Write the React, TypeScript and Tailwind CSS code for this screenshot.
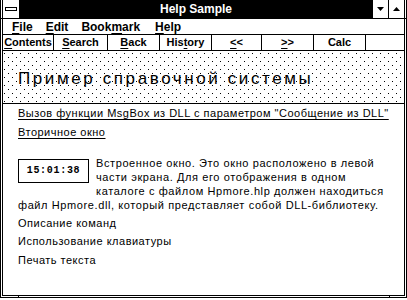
import React from 'react';

const menuItems = [
	{ key: 'file', pre: '', hot: 'F', post: 'ile' },
	{ key: 'edit', pre: '', hot: 'E', post: 'dit' },
	{ key: 'bookmark', pre: 'Book', hot: 'm', post: 'ark' },
	{ key: 'help', pre: '', hot: 'H', post: 'elp' },
];

const buttons = [
	{ key: 'contents', w: 'w-[51px]', pre: '', hot: 'C', post: 'ontents' },
	{ key: 'search', w: 'w-[54px]', pre: '', hot: 'S', post: 'earch' },
	{ key: 'back', w: 'w-[52px]', pre: '', hot: 'B', post: 'ack' },
	{ key: 'history', w: 'w-[52px]', pre: 'His', hot: 't', post: 'ory' },
	{ key: 'prev', w: 'w-[50px]', pre: '', hot: '<', post: '<' },
	{ key: 'next', w: 'w-[52px]', pre: '', hot: '>', post: '>' },
	{ key: 'calc', w: 'w-[52px]', pre: 'Calc', hot: '', post: '' },
];

function Hot({ pre, hot, post }: { pre: string; hot: string; post: string }) {
	return (
		<span>
			{pre}
			{hot && <span className="underline decoration-1 underline-offset-[2px]">{hot}</span>}
			{post}
		</span>
	);
}

export default function App() {
	return (
		<div className="relative w-[407px] h-[300px] bg-white overflow-hidden font-['Liberation_Sans',sans-serif] text-black">
			{/* outer frame */}
			<div className="h-[298px] border-x border-b border-black px-px pb-px bg-white">
				<div className="h-full flex flex-col border-x border-b border-black">
					{/* title bar */}
					<div className="flex h-[19px] border-b border-black">
						<div className="w-[16px] bg-white flex items-center justify-center">
							<div className="w-[12px] h-[4px] border border-black bg-white"></div>
						</div>
						<div className="flex-1 bg-black text-white text-[12px] font-bold flex items-center justify-center">
							Help Sample
						</div>
						<div className="w-[16px] bg-white flex items-center justify-center border-r border-black">
							<svg width="7" height="4" viewBox="0 0 7 4">
								<polygon points="0,0 7,0 3.5,4" fill="#000" />
							</svg>
						</div>
						<div className="w-[15px] bg-white flex items-center justify-center">
							<svg width="7" height="4" viewBox="0 0 7 4">
								<polygon points="0,4 7,4 3.5,0" fill="#000" />
							</svg>
						</div>
					</div>

					{/* menu bar */}
					<div className="flex items-center h-[16px] border-b border-black pl-[9px] gap-[13px] text-[12px] font-bold">
						{menuItems.map((m) => (
							<div key={m.key} className={m.key === 'help' ? 'ml-[2px]' : ''}>
								<Hot pre={m.pre} hot={m.hot} post={m.post} />
							</div>
						))}
					</div>

					{/* button bar */}
					<div className="flex h-[16px] border-b border-black text-[11px] font-bold">
						{buttons.map((b) => (
							<div key={b.key} className={`${b.w} border-r border-black flex items-center justify-center`}>
								<Hot pre={b.pre} hot={b.hot} post={b.post} />
							</div>
						))}
					</div>

					{/* non-scrolling region */}
					<div className="h-[53px] border-b border-black flex items-center pl-[15px] pt-[3px] bg-white bg-[image:conic-gradient(at_1px_1px,transparent_75%,#000_0),conic-gradient(at_1px_1px,transparent_75%,#000_0)] bg-[length:8px_8px] bg-[position:1px_2px,5px_6px]">
						<span className="text-[17px] tracking-[2.6px]">Пример справочной системы</span>
					</div>

					{/* topic */}
					<div className="flex-1 bg-white pl-[15px] pt-[2px] text-[11px] leading-[14px] tracking-[0.5px]">
						<p className="underline decoration-1 underline-offset-[2px] whitespace-nowrap">
							Вызов функции MsgBox из DLL с параметром &quot;Сообщение из DLL&quot;
						</p>
						<p className="mt-[5px] underline decoration-1 underline-offset-[2px]">Вторичное окно</p>
						<div className="mt-[17px] whitespace-nowrap tracking-[0.6px]">
							<div className="float-left mt-[3px] mr-[7px] mb-[6px] w-[71px] h-[24px] border border-black flex items-center justify-center font-['Liberation_Mono',monospace] font-bold text-[10px] tracking-[0.7px]">
								15:01:38
							</div>
							Встроенное окно. Это окно расположено в левой
							<br />
							части экрана. Для его отображения в одном
							<br />
							каталоге с файлом Hpmore.hlp должен находиться
							<br />
							файл Hpmore.dll, который представляет собой DLL-библиотеку.
						</div>
						<p className="mt-[4px]">Описание команд</p>
						<p className="mt-[4px]">Использование клавиатуры</p>
						<p className="mt-[5px]">Печать текста</p>
					</div>
				</div>
			</div>

			{/* sizing border ticks */}
			<div className="absolute left-[1px] top-[18px] w-px h-px bg-black"></div>
			<div className="absolute right-[1px] top-[18px] w-px h-px bg-black"></div>
			<div className="absolute left-[18px] top-[296px] w-px h-px bg-black"></div>
			<div className="absolute left-[389px] top-[296px] w-px h-px bg-black"></div>
		</div>
	);
}
